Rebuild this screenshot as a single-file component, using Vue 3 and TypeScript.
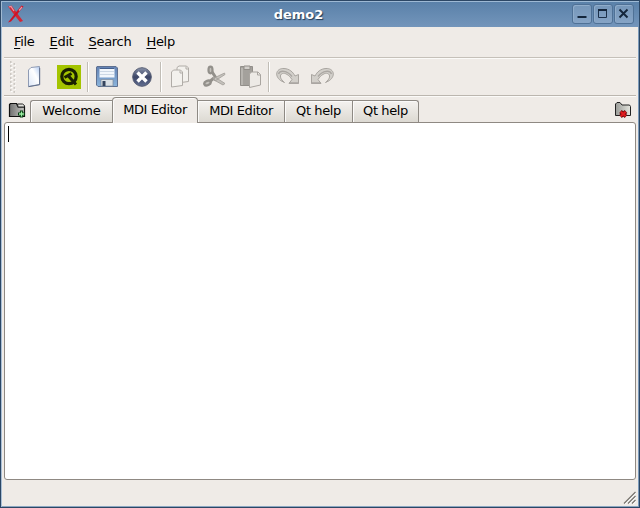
<script setup lang="ts">
import { ref } from 'vue'

interface Tab { title: string; width: number }

const menus: string[] = ['File', 'Edit', 'Search', 'Help']
const tabs: Tab[] = [
  { title: 'Welcome', width: 82 },
  { title: 'MDI Editor', width: 86 },
  { title: 'MDI Editor', width: 86 },
  { title: 'Qt help', width: 68 },
  { title: 'Qt help', width: 67 },
]
const active = ref(1)
</script>

<template>
  <div class="window">
    <header class="titlebar">
      <svg class="logo" width="18" height="20" viewBox="0 0 18 20">
        <path d="M1 2.500 L4.500 1.500 L10 9 L16 17 L13 18 L7.500 11 Z" fill="#d42535" />
        <path d="M14.500 1.500 L16.500 2.500 L10 10.500 L4 17.500 L1 18.500 L7.500 10 Z" fill="#cc1428" />
        <path d="M2 3 L4 2.500 L7 7 M15 3 L12 6.500" fill="none" stroke="#e99aa8" stroke-width="1.200" />
      </svg>
      <h1 class="title">demo2</h1>
      <div class="controls">
        <button class="ctl"><svg width="18" height="18"><path d="M4.500 12h9" stroke="#14263c" stroke-width="2" /></svg></button>
        <button class="ctl"><svg width="18" height="18"><path d="M4.500 4.500h8v8h-8z" fill="none" stroke="#1c304a" /><path d="M4 5h9" stroke="#14263c" stroke-width="2" /></svg></button>
        <button class="ctl"><svg width="18" height="18"><path d="M4.500 4.500l8 8M12.500 4.500l-8 8" stroke="#14263c" stroke-width="1.900" /></svg></button>
      </div>
    </header>

    <nav class="menubar">
      <span v-for="m in menus" :key="m" class="menu"><span class="key">{{ m[0] }}</span>{{ m.slice(1) }}</span>
    </nav>

    <div class="toolbar">
      <svg class="grip" width="8" height="32">
        <g v-for="n in 8" :key="n" :transform="`translate(0 ${(n - 1) * 4})`">
          <path d="M1 1h1.500M4.500 3h1.500" stroke="#c0bcb6" stroke-width="1.500" />
          <path d="M2 2.500h1.500M5.500 4.300h1.500" stroke="#fff" />
        </g>
      </svg>
      <svg class="new" width="16" height="24" viewBox="0 0 16 24">
        <defs>
          <linearGradient id="paper" x1="1" y1="0" x2="0" y2="1"><stop offset="0" stop-color="#b4ccf2" /><stop offset=".4" stop-color="#fff" /><stop offset="1" stop-color="#dce7f8" /></linearGradient>
        </defs>
        <path d="M2.500 5 L5 2.500 L13.500 1.500 V19.500 L2.500 21.500 Z" fill="url(#paper)" stroke="#8f9bb4" />
        <path d="M2.500 21.700 L13.700 19.700 V3" fill="none" stroke="#62708c" />
      </svg>
      <svg class="qt" width="24" height="24" viewBox="0 0 24 24">
        <rect width="24" height="24" fill="#a4c400" />
        <circle cx="12" cy="11.500" r="7.200" fill="none" stroke="#1a2100" stroke-width="3.200" />
        <path d="M7.500 12.500 L14.500 8.500 M11 10.500 L19 19.500" stroke="#1a2100" stroke-width="3" />
      </svg>
      <i class="sep"></i>
      <svg class="save" width="24" height="24" viewBox="0 0 24 24">
        <defs>
          <linearGradient id="disk" x1="0" y1="0" x2="0" y2="1"><stop offset="0" stop-color="#6382b4" /><stop offset="1" stop-color="#8bb5dc" /></linearGradient>
        </defs>
        <path d="M2 1.500 H21 L22.500 3 V21.500 H3 L1.500 20 V2 Z" fill="url(#disk)" stroke="#5f7090" />
        <path d="M4.500 3 H19.500 V12.500 H4.500 Z" fill="#f2f7fc" />
        <path d="M4.500 3.500 H19.500" stroke="#46608d" />
        <path d="M5 6.500h14M5 9.500h14" stroke="#ccd8e5" />
        <path d="M6 14.500 H18 V21 H6 Z" fill="#dae0e5" stroke="#7c8b9c" stroke-width=".7" />
        <path d="M7.500 16 H10.500 V21 H7.500 Z" fill="#34445d" />
      </svg>
      <svg class="close" width="22" height="24" viewBox="0 0 22 24">
        <defs>
          <linearGradient id="ball" x1="0" y1="0" x2="0" y2="1"><stop offset="0" stop-color="#8a93aa" /><stop offset=".5" stop-color="#3d4667" /><stop offset="1" stop-color="#626f92" /></linearGradient>
        </defs>
        <circle cx="11" cy="12" r="9.300" fill="url(#ball)" stroke="#555c73" />
        <path d="M6.500 7.500 L15.500 16.500 M15.500 7.500 L6.500 16.500" stroke="#fff" stroke-width="3.400" />
      </svg>
      <i class="sep"></i>
      <svg class="copy" width="22" height="26" viewBox="0 0 22 26" fill="#f3f1ed" stroke="#b0aca7">
        <path d="M8 3.500 L10 2 H17.500 L19.500 4 V17.500 L8 19 Z" />
        <path d="M2.500 8 L4.500 6 H11.500 L13.500 8 V21.500 L2.500 23 Z" />
        <path d="M11 6.500 V9 H13.500 M17 2.500 V5 H19" fill="none" />
      </svg>
      <svg class="cut" width="26" height="24" viewBox="0 0 26 24">
        <path d="M9.500 6 L14 13 M6 18 L12 13" stroke="#93908b" stroke-width="3" />
        <path d="M11 13.500 L22.500 8 L23 9.500 L13 16 Z M13 12 L23 18.500 L21 20 L12 15 Z" fill="#c4c1bc" stroke="#a19d98" stroke-width=".8" />
        <ellipse cx="8.500" cy="5" rx="2" ry="3.300" fill="#c4c1bc" stroke="#93908b" stroke-width="2.200" />
        <ellipse cx="5.500" cy="18" rx="3.300" ry="2.200" transform="rotate(-25 5.500 18)" fill="#c4c1bc" stroke="#93908b" stroke-width="2.400" />
      </svg>
      <svg class="paste" width="26" height="26" viewBox="0 0 26 26">
        <path d="M2.500 2.500 H14.500 V21.500 H2.500 Z" fill="#a4a19c" stroke="#928f8a" />
        <path d="M3 4h2v17H3z" fill="#b8b5b0" />
        <path d="M6 2h6v3.500H6z" fill="#d2cfca" stroke="#928e89" />
        <path d="M11.500 10 L13.500 8 H20 L22.500 10.500 V21 L11.500 23.500 Z" fill="#edeae6" stroke="#a9a5a0" />
        <path d="M19.500 8 V11 H22.500" fill="none" stroke="#a9a5a0" />
      </svg>
      <i class="sep"></i>
      <svg class="redo" width="26" height="22" viewBox="0 0 26 22">
        <path d="M5.500 14.500 C-1.500 9 2 2 9 2.500 C14.500 2.800 18 6 20 10 L23.500 8.500 V17.500 H14 L17 13.500 C14 9 10 6.500 7.500 7.500 C4 8.700 5 13 9.500 16.500 Z" fill="#d2cfca" stroke="#a9a5a0" />
        <path d="M3.500 8 C5 4 12 4 17 10.500 M14 17 H23.500" fill="none" stroke="#aaa6a2" stroke-width="1.300" />
      </svg>
      <svg class="undo" width="26" height="22" viewBox="0 0 26 22">
        <g transform="translate(26 0) scale(-1 1)">
          <path d="M5.500 14.500 C-1.500 9 2 2 9 2.500 C14.500 2.800 18 6 20 10 L23.500 8.500 V17.500 H14 L17 13.500 C14 9 10 6.500 7.500 7.500 C4 8.700 5 13 9.500 16.500 Z" fill="#d2cfca" stroke="#a9a5a0" />
          <path d="M3.500 8 C5 4 12 4 17 10.500 M14 17 H23.500" fill="none" stroke="#aaa6a2" stroke-width="1.300" />
        </g>
      </svg>
    </div>

    <div class="tabbar">
      <svg class="corner" width="18" height="17" viewBox="0 0 18 17">
        <defs>
          <linearGradient id="folder" x1="0" y1="0" x2="1" y2="0"><stop offset="0" stop-color="#707070" /><stop offset="1" stop-color="#c8c8c4" /></linearGradient>
        </defs>
        <path d="M1.500 2.500 L2.500 1.500 H8.500 L10 5 H16.500 V14.500 H1.500 Z" fill="url(#folder)" stroke="#111" stroke-width="1.200" />
        <path d="M9.500 2 H14.500 L16.500 3.500 V5 H10 Z" fill="#e4e4df" stroke="#222" />
        <path d="M13.500 8.500 V15.500 M10 12 H17" stroke="#073b12" stroke-width="3.200" />
        <path d="M13.500 9.500 V14.500 M11 12 H16" stroke="#9cf2a4" stroke-width="1.300" />
      </svg>
      <div class="tabs">
        <div
          v-for="(t, i) in tabs"
          :key="i"
          class="tab"
          :class="{ active: i === active, last: i === tabs.length - 1 }"
          :style="{ width: t.width + 'px' }"
          @click="active = i"
        >{{ t.title }}</div>
      </div>
      <svg class="corner right" width="18" height="18" viewBox="0 0 18 18">
        <defs>
          <linearGradient id="folder2" x1="0" y1="0" x2="1" y2="0"><stop offset="0" stop-color="#999b98" /><stop offset="1" stop-color="#e5e6df" /></linearGradient>
        </defs>
        <path d="M1.500 14.500 V3 L3 1.500 H6 L8 4 H15.500 L16.500 5.500 V14.500 Z" fill="url(#folder2)" stroke="#222" />
        <path d="M6.500 10.500 L12 15.500 M12 10.500 L6.500 15.500" stroke="#740b0b" stroke-width="3.800" />
        <path d="M6.800 10.800 L11.700 15.200 M11.700 10.800 L6.800 15.200" stroke="#e21c20" stroke-width="2.200" />
      </svg>
    </div>

    <main class="editor"><span class="caret"></span></main>

    <footer class="status">
      <svg width="14" height="14" viewBox="0 0 14 14">
        <path d="M2 13 L13 2 M6 13 L13 6 M10 13 L13 10" stroke="#fff" stroke-width="1.200" />
        <path d="M1 12.500 L12.500 1 M5 12.500 L12.500 5 M9 12.500 L12.500 9" stroke="#77736d" stroke-width="1.200" />
      </svg>
    </footer>
  </div>
</template>

<style>
body { margin: 0; overflow: hidden; }
</style>

<style scoped>
.window {
  box-sizing: border-box;
  width: 640px;
  height: 508px;
  display: flex;
  flex-direction: column;
  background: #efebe7;
  border: 1px solid #2c4765;
  box-shadow: inset 1px 0 #a9bfd6, inset -1px 0 #7c9aba, inset 0 -1px #8ca6c0;
  font: 13px/16px "DejaVu Sans", sans-serif;
  color: #000;
}
.titlebar {
  box-sizing: border-box;
  height: 26px;
  flex: none;
  display: flex;
  align-items: center;
  border-top: 1px solid #9db9d4;
  border-left: 1px solid #a0b9d1;
  background: linear-gradient(#5a81a9, #7395bb);
}
.logo { margin: 0 0 2px 5px; }
.title {
  flex: 1;
  margin: 0;
  text-align: center;
  font-size: 13px;
  line-height: 16px;
  font-weight: bold;
  color: #fff;
  text-shadow: 1px 1px 1px #203a55;
}
.controls { display: flex; gap: 1px; margin: 0 5px 2px 0; }
.ctl {
  box-sizing: border-box;
  width: 20px;
  height: 20px;
  padding: 0;
  border: 1px solid #4f7196;
  border-radius: 3px;
  background: linear-gradient(#7596b9, #86a4c6);
  box-shadow: inset 1px 1px #8facca;
}
.ctl svg { display: block; }
.menubar {
  box-sizing: border-box;
  height: 31px;
  flex: none;
  display: flex;
  align-items: center;
  gap: 15px;
  margin: 0 3px;
  padding-left: 10px;
  border-bottom: 1px solid #c5c0b9;
  letter-spacing: -0.3px;
}
.key { text-decoration: underline; text-underline-offset: 2px; text-decoration-thickness: 1px; }
.toolbar {
  box-sizing: border-box;
  height: 38px;
  flex: none;
  display: flex;
  align-items: center;
  margin: 0 3px;
  padding-left: 5px;
  border-top: 1px solid #fbfaf8;
  border-bottom: 1px solid #bbb6af;
}
.toolbar svg { flex: none; }
.new { margin-left: 9px; }
.qt { margin-left: 15px; }
.sep { width: 1px; height: 30px; background: #c1bdb6; box-shadow: 1px 0 #fff; }
.qt + .sep { margin-left: 6px; }
.save { margin-left: 7px; }
.close { margin-left: 12px; }
.close + .sep { margin-left: 7px; }
.copy { margin-left: 8px; }
.cut { margin-left: 11px; }
.paste { margin-left: 10px; }
.paste + .sep { margin-left: 4px; }
.redo { margin-left: 6px; }
.undo { margin-left: 8px; }
.tabbar {
  height: 25px;
  flex: none;
  display: flex;
  align-items: flex-end;
  margin: 0 3px;
  border-top: 1px solid #fbfaf8;
}
.corner { align-self: center; margin: 1px 0 0 4px; width: 18px; flex: none; }
.tabs { display: flex; align-items: flex-end; margin-left: 4px; }
.tab {
  box-sizing: border-box;
  height: 22px;
  border: 1px solid #8e8a84;
  border-right: 0;
  border-bottom: 0;
  background: linear-gradient(#f4f2ef, #dcd9d2);
  box-shadow: inset 1px 1px #fbfaf9;
  text-align: center;
  line-height: 19px;
  letter-spacing: -0.4px;
  white-space: nowrap;
}
.tab:first-child { border-top-left-radius: 3px; letter-spacing: -0.15px; }
.tab.last { border-right: 1px solid #8e8a84; border-top-right-radius: 3px; }
.tab.active {
  position: relative;
  height: 26px;
  margin-bottom: -1px;
  border-right: 1px solid #8e8a84;
  border-radius: 4px 4px 0 0;
  background: #efebe7;
  line-height: 24px;
}
.tab.active + .tab { border-left: 0; }
.right { margin-left: auto; margin-right: 4px; }
.editor {
  flex: 1;
  margin: 0 3px;
  background: #fff;
  border: 1px solid #8f8983;
  border-radius: 3px;
}
.caret { display: block; width: 1px; height: 16px; margin: 3px 0 0 3px; background: #000; }
.status {
  height: 27px;
  flex: none;
  display: flex;
  justify-content: flex-end;
  align-items: flex-end;
}
.status svg { margin: 0 2px 2px 0; }
</style>
